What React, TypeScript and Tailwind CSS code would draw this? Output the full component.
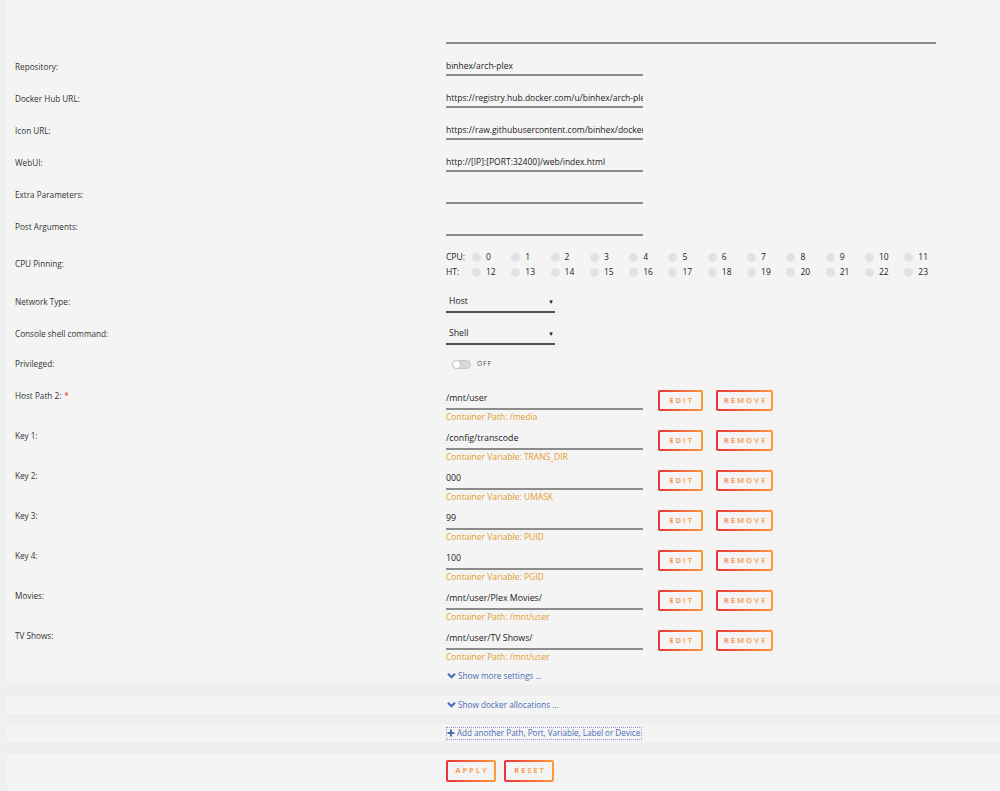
import { ReactNode } from 'react';

const font = { fontFamily: '"Open Sans", "Liberation Sans", sans-serif' };

const textRows = [
    { label: 'Repository:', value: 'binhex/arch-plex' },
    { label: 'Docker Hub URL:', value: 'https://registry.hub.docker.com/u/binhex/arch-plex/' },
    { label: 'Icon URL:', value: 'https://raw.githubusercontent.com/binhex/docker-templates/master/binhex/images/plex-icon.png' },
    { label: 'WebUI:', value: 'http://[IP]:[PORT:32400]/web/index.html' },
    { label: 'Extra Parameters:', value: '' },
    { label: 'Post Arguments:', value: '' },
];

const configRows = [
    { label: 'Host Path 2:', required: true, value: '/mnt/user', hint: 'Container Path: /media' },
    { label: 'Key 1:', value: '/config/transcode', hint: 'Container Variable: TRANS_DIR' },
    { label: 'Key 2:', value: '000', hint: 'Container Variable: UMASK' },
    { label: 'Key 3:', value: '99', hint: 'Container Variable: PUID' },
    { label: 'Key 4:', value: '100', hint: 'Container Variable: PGID' },
    { label: 'Movies:', value: '/mnt/user/Plex Movies/', hint: 'Container Path: /mnt/user' },
    { label: 'TV Shows:', value: '/mnt/user/TV Shows/', hint: 'Container Path: /mnt/user' },
];

const Label = ({ children }: { children: ReactNode }) => (
    <div className="w-[431px] shrink-0 text-[8.2px] text-[#333]">{children}</div>
);

const GradButton = ({ text, w, h }: { text: string; w: string; h: string }) => (
    <button
        className={`${w} ${h} rounded-[2px] border-2 border-transparent flex items-center justify-center [background:linear-gradient(#f4f4f4,#f4f4f4)_padding-box,linear-gradient(90deg,#e8323a,#ff9a3c)_border-box]`}
    >
        <span className="pl-[2px] text-[7.5px] font-bold tracking-[2px] bg-gradient-to-r from-[#f68a48] to-[#fdac5a] bg-clip-text text-transparent">
            {text}
        </span>
    </button>
);

const Chevron = () => (
    <svg width="9" height="7" viewBox="0 0 10 8" className="mr-[2px]">
        <path d="M1 2 L5 6 L9 2" fill="none" stroke="#4a6db5" strokeWidth="2.4" />
    </svg>
);

const App = () => {
    const cpus = Array.from({ length: 12 }, (_, i) => i);

    return (
        <div className="w-[1000px] h-[791px] overflow-hidden bg-[#efefef]" style={font}>
            <div className="bg-[#f4f4f4] ml-[7px] pl-[8px] pt-[19px] pb-[1px]">
                <div className="flex h-[32px] items-center">
                    <Label>{''}</Label>
                    <div className="w-[490px] h-[18px] border-b-2 border-[#8c8c8c]" />
                </div>
                {textRows.map((r) => (
                    <div key={r.label} className="flex h-[32px] items-center">
                        <Label>{r.label}</Label>
                        <div className="w-[197px] h-[18px] border-b-2 border-[#8c8c8c] flex items-center overflow-hidden whitespace-nowrap text-[8.5px] text-[#222]">
                            {r.value}
                        </div>
                    </div>
                ))}

                <div className="flex h-[43px] items-center">
                    <Label>CPU Pinning:</Label>
                    <div className="flex flex-col gap-[2px] text-[8.5px] text-[#222]">
                        {['CPU:', 'HT:'].map((t, row) => (
                            <div key={t} className="flex items-center h-[13px]">
                                <span className="w-[26px]">{t}</span>
                                {cpus.map((c) => (
                                    <div key={c} className="flex items-center w-[39.3px]">
                                        <span className="w-[9px] h-[9px] rounded-full bg-[#e2e2e2]" />
                                        <span className="ml-[5px]">{c + row * 12}</span>
                                    </div>
                                ))}
                            </div>
                        ))}
                    </div>
                </div>

                {[
                    { label: 'Network Type:', value: 'Host' },
                    { label: 'Console shell command:', value: 'Shell' },
                ].map((s) => (
                    <div key={s.label} className="flex h-[32px] items-center">
                        <Label>{s.label}</Label>
                        <div className="w-[109px] h-[19px] mt-[2px] border-b-2 border-[#555] flex items-center justify-between pl-[3px] pr-[1px] text-[8.7px] text-[#222]">
                            <span>{s.value}</span>
                            <span className="text-[6px]">▼</span>
                        </div>
                    </div>
                ))}

                <div className="flex h-[26px] items-center pt-[2px]">
                    <Label>Privileged:</Label>
                    <div className="flex items-center pl-[6px]">
                        <div className="relative w-[19px] h-[9px] rounded-full bg-[#d8d8d8] border border-[#c8c8c8]">
                            <span className="absolute left-[-1px] top-[-1px] w-[9px] h-[9px] rounded-full bg-white border border-[#c8c8c8]" />
                        </div>
                        <span className="ml-[6px] text-[6.5px] tracking-[1px] text-[#444]">OFF</span>
                    </div>
                </div>

                <div className="mt-[11px]">
                    {configRows.map((r) => (
                        <div key={r.label} className="flex h-[40px] pt-[3px]">
                            <Label>
                                <div className="leading-[12px]">
                                    {r.label}
                                    {r.required && <span className="ml-[3px] text-[#e22828]">*</span>}
                                </div>
                            </Label>
                            <div className="flex items-start">
                                <div className="w-[197px]">
                                    <div className="h-[20px] border-b-2 border-[#8c8c8c] flex items-center text-[8.8px] text-[#222]">
                                        {r.value}
                                    </div>
                                    <div className="leading-[14px] text-[8.5px] text-[#e99d2c]">{r.hint}</div>
                                </div>
                                <div className="ml-[15px]">
                                    <GradButton text="EDIT" w="w-[45px]" h="h-[21px]" />
                                </div>
                                <div className="ml-[13px]">
                                    <GradButton text="REMOVE" w="w-[57px]" h="h-[21px]" />
                                </div>
                            </div>
                        </div>
                    ))}
                </div>

                <div className="flex h-[14px] mt-[2px] items-center">
                    <Label>{''}</Label>
                    <div className="flex items-center text-[8.2px] text-[#4a6db5] pl-[1px]">
                        <Chevron />
                        Show more settings ...
                    </div>
                </div>
            </div>

            <div className="bg-[#f4f4f4] ml-[7px] pl-[8px] mt-[12px] h-[18px] flex items-center">
                <Label>{''}</Label>
                <div className="flex items-center text-[8.2px] text-[#4a6db5] pl-[1px]">
                    <Chevron />
                    Show docker allocations ...
                </div>
            </div>

            <div className="bg-[#f4f4f4] ml-[7px] pl-[8px] mt-[10px] h-[18px] flex items-center">
                <Label>{''}</Label>
                <div className="flex items-center h-[13px] border border-dotted border-[#8aa0d4] text-[8.1px] text-[#4a6db5] pr-[1px]">
                    <svg width="8" height="8" viewBox="0 0 8 8" className="mr-[2px]">
                        <path d="M4 0.5 V7.5 M0.5 4 H7.5" stroke="#4a6db5" strokeWidth="2" />
                    </svg>
                    Add another Path, Port, Variable, Label or Device
                </div>
            </div>

            <div className="bg-[#f4f4f4] ml-[7px] pl-[8px] mt-[12px] h-[60px] pt-[6px] flex">
                <Label>{''}</Label>
                <div className="flex gap-[8px] items-start">
                    <GradButton text="APPLY" w="w-[50px]" h="h-[22px]" />
                    <GradButton text="RESET" w="w-[50px]" h="h-[22px]" />
                </div>
            </div>
        </div>
    );
};

export default App;
